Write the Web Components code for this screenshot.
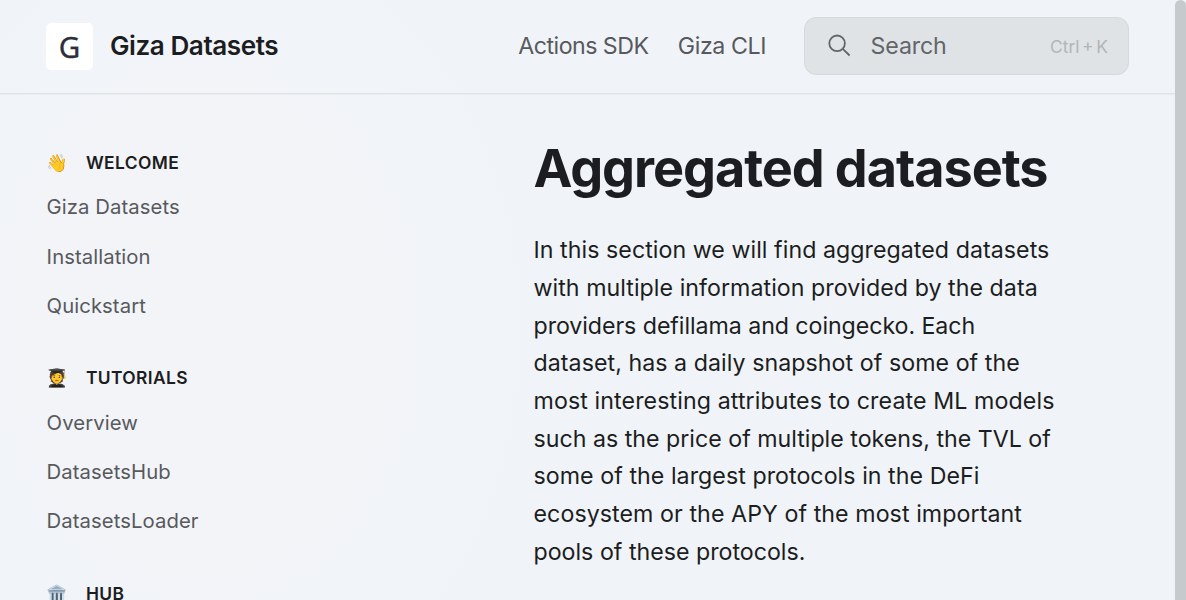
<!DOCTYPE html>
<html lang="en">
<head>
<meta charset="utf-8">
<title>Aggregated datasets | Giza Datasets</title>
<style>
html, body { margin: 0; height: 100%; overflow: hidden; }
body { font-family: Inter, "Liberation Sans", sans-serif; color: #1c1d21; background: #f0f4f8; }
</style>
</head>
<body>
<docs-page></docs-page>
<script>
const define = (name, html) => customElements.define(name, class extends HTMLElement {
  constructor() {
    super();
    const t = document.createElement('template');
    t.innerHTML = html;
    this.attachShadow({ mode: 'open' }).append(t.content.cloneNode(true));
  }
});

define('site-logo', `
<style>
:host { display: flex; align-items: center; gap: 17px; font-size: 26.1px; font-weight: 600; letter-spacing: -0.45px; line-height: 32px; white-space: nowrap; }
.mark { width: 47px; height: 47px; border-radius: 5px; background: #fff; display: grid; place-items: center; color: #2b2e3b; font: 400 29.5px/31px "Noto Sans", sans-serif; letter-spacing: 0; -webkit-text-stroke: 0.35px #2b2e3b; }
.name { margin-top: -1px; }
</style>
<div class="mark"><span>G</span></div><span class="name"><slot></slot></span>`);

define('nav-link', `
<style>
:host { display: block; font-size: 23.2px; line-height: 34px; letter-spacing: var(--track, -0.42px); color: #58595d; white-space: nowrap; }
</style><slot></slot>`);

define('search-box', `
<style>
:host { box-sizing: border-box; display: flex; align-items: center; width: 325px; height: 58px; padding: 0 20px 0 22px; border: 1.5px solid #d7dadd; border-radius: 12px; background: #dfe3e6; color: #636568; font-size: 23.2px; line-height: 34px; }
svg { width: 24px; height: 24px; margin-right: 19.6px; flex: none; }
.label { flex: 1; letter-spacing: -0.15px; }
.keys { font-size: 17.4px; color: #b2b5b8; white-space: nowrap; word-spacing: -2.2px; margin-top: 2px; }
</style>
<svg viewBox="0 0 24 24" fill="none" stroke="currentColor" stroke-width="1.8"><circle cx="10.1" cy="9.3" r="7.8"/><path d="M15.8 14.9 22.6 21.5"/></svg>
<span class="label"><slot></slot></span><span class="keys">Ctrl + K</span>`);

define('site-header', `
<style>
:host { box-sizing: border-box; display: flex; align-items: center; height: 94px; padding: 0 46px 1px; border-bottom: 1px solid #e0e4e7; box-shadow: 0 1px 0 #e9edf0; }
nav { display: flex; gap: 29.4px; margin-left: auto; margin-right: 38px; }
</style>
<site-logo>Giza Datasets</site-logo>
<nav><nav-link style="--track:-0.54px">Actions SDK</nav-link><nav-link>Giza CLI</nav-link></nav>
<search-box>Search</search-box>`);

define('side-item', `
<style>
:host { display: block; font-size: 20.3px; line-height: 49.2px; letter-spacing: 0.07px; color: #58595d; white-space: nowrap; margin-left: -0.4px; }
</style><slot></slot>`);

define('side-group', `
<style>
:host { display: block; margin-bottom: 27.2px; }
.head { display: flex; align-items: center; gap: 17.5px; height: 40.7px; font-size: 17.4px; font-weight: 600; letter-spacing: 0.4px; white-space: nowrap; }
.icon { width: 22px; flex: none; font: 17.4px/22px "Noto Color Emoji", sans-serif; letter-spacing: 0; padding-top: 1px; margin-left: -0.6px; }
</style>
<div class="head"><span class="icon"><slot name="icon"></slot></span><slot name="title"></slot></div>
<slot></slot>`);

define('side-nav', `
<style>
:host { display: block; padding: 47.8px 0 0 47px; }
</style>
<side-group><span slot="icon">👋</span><span slot="title">WELCOME</span>
<side-item>Giza Datasets</side-item><side-item>Installation</side-item><side-item>Quickstart</side-item></side-group>
<side-group><span slot="icon">🧑‍🎓</span><span slot="title">TUTORIALS</span>
<side-item>Overview</side-item><side-item>DatasetsHub</side-item><side-item>DatasetsLoader</side-item></side-group>
<side-group><span slot="icon">🏛️</span><span slot="title">HUB</span></side-group>`);

define('doc-line', `
<style>
:host { display: block; white-space: nowrap; }
</style><slot></slot>`);

define('doc-article', `
<style>
:host { display: block; padding: 41.5px 0 0; width: 530px; }
h1 { margin: 0; font-size: 52.2px; line-height: 65px; font-weight: 700; letter-spacing: -1.06px; white-space: nowrap; }
.text { margin: 31.6px 0 0; font-size: 23.2px; line-height: 37.72px; }
</style>
<h1><slot name="title"></slot></h1><div class="text"><slot></slot></div>`);

define('scroll-rail', `
<style>
:host { display: block; background: #f0f4f8; }
div { height: 100%; background: #c6cacd; border-radius: 6px 6px 0 0; }
</style><div></div>`);

define('docs-page', `
<style>
:host { display: grid; grid-template-columns: 1fr 11px; height: 600px; overflow: hidden; background: #f0f4f8; }
.view { height: 600px; overflow: hidden; background: radial-gradient(ellipse 330px 420px at 210px 330px, #f2f4f8 0%, #f2f4f8 50%, #f0f4f8 100%); }
.body { display: grid; grid-template-columns: 533.5px 1fr; }
doc-line { letter-spacing: var(--track, 0.05px); }
</style>
<div class="view">
<site-header></site-header>
<div class="body"><side-nav></side-nav>
<doc-article><span slot="title">Aggregated datasets</span>
<doc-line>In this section we will find aggregated datasets</doc-line>
<doc-line>with multiple information provided by the data</doc-line>
<doc-line style="--track:-0.06px">providers defillama and coingecko. Each</doc-line>
<doc-line>dataset, has a daily snapshot of some of the</doc-line>
<doc-line style="--track:0.1px">most interesting attributes to create ML models</doc-line>
<doc-line style="--track:0px">such as the price of multiple tokens, the TVL of</doc-line>
<doc-line>some of the largest protocols in the DeFi</doc-line>
<doc-line style="--track:0.07px">ecosystem or the APY of the most important</doc-line>
<doc-line style="--track:0px">pools of these protocols.</doc-line>
</doc-article></div>
</div>
<scroll-rail></scroll-rail>`);
</script>
</body>
</html>
